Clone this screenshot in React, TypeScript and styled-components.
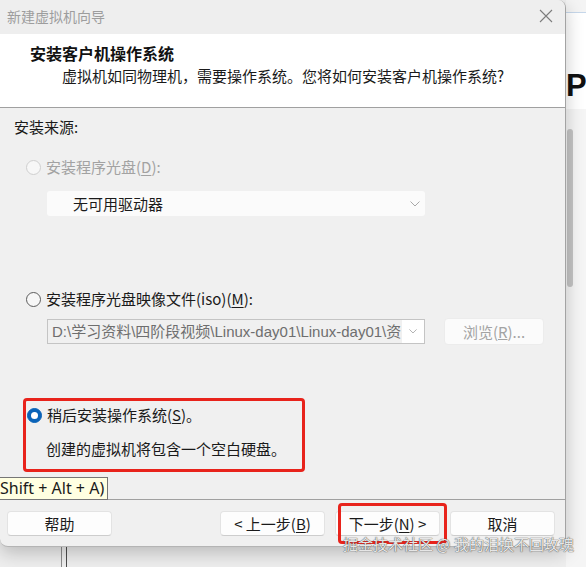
import React from "react";
import styled, { createGlobalStyle } from "styled-components";

const GlobalStyle = createGlobalStyle`
  html, body {
    margin: 0;
    padding: 0;
  }
  body {
    width: 586px;
    height: 567px;
    overflow: hidden;
    background: #efefef;
    font-family: "Noto Sans CJK SC", "Noto Sans", sans-serif;
    -webkit-font-smoothing: antialiased;
  }
  * {
    box-sizing: border-box;
  }
`;

const ChevronDown: React.FC<{ color?: string; size?: number }> = ({
  color = "#9a9a9a",
  size = 10,
}) => (
  <svg width={size} height={size * 0.6} viewBox="0 0 10 6" fill="none">
    <polyline points="0.5,0.5 5,5 9.5,0.5" stroke={color} strokeWidth="1" />
  </svg>
);

const CloseIcon = () => (
  <svg width="14" height="14" viewBox="0 0 14 14" fill="none">
    <path d="M1 1 L13 13 M13 1 L1 13" stroke="#7d7d7d" strokeWidth="1.1" />
  </svg>
);

const App: React.FC = () => {
  return (
    <>
      <GlobalStyle />
      <Desktop>
        <BackWindow>
          <BackTopBar />
          <BackHero>Pp</BackHero>
          <BackScroll>
            <ScrollThumb />
          </BackScroll>
        </BackWindow>
        <BackLines>
          <VLine $color="#8d8d8d" />
          <VLine $color="#4c4c4c" />
        </BackLines>

        <Dialog>
          <TitleBar>
            <WindowTitle>新建虚拟机向导</WindowTitle>
            <CloseIcon />
          </TitleBar>

          <Header>
            <HeaderTitle>安装客户机操作系统</HeaderTitle>
            <HeaderSub>
              虚拟机如同物理机，需要操作系统。您将如何安装客户机操作系统?
            </HeaderSub>
          </Header>

          <Body>
            <SectionLabel>安装来源:</SectionLabel>

            <OptionRow $top={20} $disabled>
              <Radio $state="disabled" />
              <span>
                安装程序光盘(<u>D</u>):
              </span>
            </OptionRow>
            <DriveSelect>
              <span>无可用驱动器</span>
              <ChevronDown color="#a8a8a8" />
            </DriveSelect>

            <OptionRow $top={73}>
              <Radio $state="off" />
              <span>
                安装程序光盘映像文件(iso)(<u>M</u>):
              </span>
            </OptionRow>
            <PathRow>
              <PathCombo>
                <PathText>D:\学习资料\四阶段视频\Linux-day01\Linux-day01\资</PathText>
                <ComboButton>
                  <ChevronDown color="#a0a0a0" size={8} />
                </ComboButton>
              </PathCombo>
              <BrowseButton>
                浏览(<u>R</u>)...
              </BrowseButton>
            </PathRow>

            <Marked>
              <OptionRow $top={0}>
                <Radio $state="on" />
                <span>
                  稍后安装操作系统(<u>S</u>)。
                </span>
              </OptionRow>
              <Note>创建的虚拟机将包含一个空白硬盘。</Note>
            </Marked>
          </Body>

          <Footer>
            <Button>帮助</Button>
            <ButtonGroup>
              <Button>
                &lt; 上一步(<u>B</u>)
              </Button>
              <NextButton>
                下一步(<u>N</u>) &gt;
              </NextButton>
              <Button>取消</Button>
            </ButtonGroup>
          </Footer>
        </Dialog>

        <Tooltip>Shift + Alt + A)</Tooltip>
        <Watermark>掘金技术社区 @ 我的泪换不回玫瑰</Watermark>
      </Desktop>
    </>
  );
};

export default App;

const Desktop = styled.div`
  position: relative;
  width: 586px;
  height: 567px;
  overflow: hidden;
  background: #eeeeee;
`;

const BackWindow = styled.div`
  position: absolute;
  top: 0;
  left: 566px;
  right: 0;
  bottom: 0;
  display: flex;
  flex-direction: column;
  background: #f5f5f5;
`;

const BackTopBar = styled.div`
  height: 13px;
  background: #f4f4f4;
  border-bottom: 1px solid #c6d7ea;
`;

const BackHero = styled.div`
  height: 96px;
  padding: 58px 0 0 0;
  background: #ffffff;
  color: #111;
  font: 700 31px/30px "Liberation Sans", Arial, sans-serif;
  white-space: nowrap;
  overflow: hidden;
`;

const BackScroll = styled.div`
  flex: 1;
  padding: 20px 0 0 1px;
`;

const ScrollThumb = styled.div`
  width: 6px;
  height: 158px;
  border-radius: 3px;
  background: #c4c4c4;
`;

const BackLines = styled.div`
  position: absolute;
  left: 61px;
  top: 545px;
  bottom: 0;
  display: flex;
  gap: 4px;
`;

const VLine = styled.div<{ $color: string }>`
  width: 1px;
  height: 100%;
  background: ${({ $color }) => $color};
`;

const Dialog = styled.div`
  position: absolute;
  top: 0;
  left: 0;
  width: 566px;
  height: 547px;
  display: flex;
  flex-direction: column;
  background: #f0f0f0;
  border-right: 1px solid #a3a3a3;
  border-bottom: 1px solid #b4b4b4;
  border-radius: 0 8px 8px 8px;
  overflow: hidden;
  box-shadow: 0 6px 18px rgba(0, 0, 0, 0.22);
  color: #1a1a1a;
  font-size: 15px;
`;

const TitleBar = styled.div`
  height: 34px;
  flex-shrink: 0;
  display: flex;
  align-items: center;
  justify-content: space-between;
  padding: 0 12px 2px 7px;
  background: #eeeeee;
`;

const WindowTitle = styled.span`
  color: #9d9d9d;
  font-size: 14px;
  line-height: 20px;
`;

const Header = styled.div`
  height: 74px;
  flex-shrink: 0;
  padding: 9px 0 0 30px;
  background: #ffffff;
  border-bottom: 1px solid #a0a0a0;
`;

const HeaderTitle = styled.div`
  font-weight: 700;
  font-size: 16px;
  line-height: 20px;
  color: #111;
`;

const HeaderSub = styled.div`
  margin: 3px 0 0 32px;
  font-size: 15px;
  line-height: 20px;
  color: #1a1a1a;
  white-space: nowrap;
`;

const Body = styled.div`
  height: 391px;
  flex-shrink: 0;
  padding: 9px 0 0 14px;
`;

const SectionLabel = styled.div`
  line-height: 20px;
`;

const OptionRow = styled.div<{ $top: number; $disabled?: boolean }>`
  display: flex;
  align-items: center;
  gap: 5px;
  height: 20px;
  margin: ${({ $top }) => $top}px 0 0 12px;
  color: ${({ $disabled }) => ($disabled ? "#a2a2a2" : "#1a1a1a")};
  line-height: 20px;
  white-space: nowrap;

  u {
    text-underline-offset: 2px;
  }
`;

const Radio = styled.span<{ $state: "off" | "on" | "disabled" }>`
  flex-shrink: 0;
  width: 15px;
  height: 15px;
  border-radius: 50%;
  background: ${({ $state }) => ($state === "on" ? "#0a63b8" : "#f7f7f7")};
  border: 1px solid
    ${({ $state }) =>
      $state === "on" ? "#0a63b8" : $state === "disabled" ? "#cfcfcf" : "#5c5c5c"};
  display: flex;
  align-items: center;
  justify-content: center;

  &::after {
    content: "";
    display: ${({ $state }) => ($state === "on" ? "block" : "none")};
    width: 7px;
    height: 7px;
    border-radius: 50%;
    background: #ffffff;
  }
`;

const DriveSelect = styled.div`
  width: 378px;
  height: 25px;
  margin: 14px 0 0 33px;
  padding: 0 5px 0 26px;
  display: flex;
  align-items: center;
  justify-content: space-between;
  background: #fbfbfb;
  border-radius: 3px;
  line-height: 20px;
  color: #1b1b1b;
`;

const PathRow = styled.div`
  display: flex;
  align-items: center;
  gap: 19px;
  height: 27px;
  margin: 9px 0 0 33px;
`;

const PathCombo = styled.div`
  width: 378px;
  height: 25px;
  display: flex;
  border: 1px solid #c4c4c4;
  background: #f0f0f0;
`;

const PathText = styled.div`
  flex: 1;
  min-width: 0;
  padding-left: 4px;
  overflow: hidden;
  white-space: nowrap;
  color: #6e6e6e;
  font-family: "Liberation Sans", "Noto Sans CJK SC", sans-serif;
  line-height: 23px;
`;

const ComboButton = styled.div`
  width: 22px;
  flex-shrink: 0;
  display: flex;
  align-items: center;
  justify-content: center;
  background: #ffffff;
`;

const BrowseButton = styled.div`
  width: 100px;
  height: 27px;
  display: flex;
  align-items: center;
  justify-content: center;
  background: #fbfbfb;
  border: 1px solid #ececec;
  border-radius: 4px;
  color: #a3a3a3;
  line-height: 20px;
`;

const Marked = styled.div`
  width: 282px;
  height: 74px;
  margin: 53px 0 0 9px;
  padding: 4px 0 0 0;
  border: 3px solid #e8231b;
  border-radius: 4px;

  ${OptionRow} {
    margin-left: 1px;
  }
`;

const Note = styled.div`
  margin: 14px 0 0 20px;
  line-height: 20px;
  white-space: nowrap;
`;

const Footer = styled.div`
  flex: 1;
  display: flex;
  align-items: flex-start;
  justify-content: space-between;
  padding: 11px 10px 0 7px;
  border-top: 1px solid #a0a0a0;
`;

const ButtonGroup = styled.div`
  display: flex;
  gap: 10px;
`;

const Button = styled.div`
  position: relative;
  width: 105px;
  height: 25px;
  display: flex;
  align-items: center;
  justify-content: center;
  background: #fdfdfd;
  border: 1px solid #e3e3e3;
  border-bottom-color: #cdcdcd;
  border-radius: 4px;
  line-height: 20px;
  color: #1a1a1a;
  white-space: nowrap;

  u {
    text-underline-offset: 2px;
  }
`;

const NextButton = styled(Button)`
  &::after {
    content: "";
    position: absolute;
    left: 2px;
    right: -8px;
    top: -9px;
    bottom: -9px;
    border: 3px solid #e8231b;
    border-radius: 4px;
  }
`;

const Tooltip = styled.div`
  position: absolute;
  left: -2px;
  top: 477px;
  width: 110px;
  height: 23px;
  padding-left: 1px;
  background: #ffffe1;
  border: 1px solid #767676;
  font: 16px/21px "Noto Sans", "Liberation Sans", sans-serif;
  color: #1a1a1a;
  white-space: nowrap;
  overflow: hidden;
`;

const Watermark = styled.div`
  position: absolute;
  left: 343px;
  top: 534px;
  font-size: 15px;
  line-height: 20px;
  color: rgba(250, 250, 250, 0.9);
  text-shadow: 0 0 1px #555, 0 0 1px #555;
  white-space: nowrap;
`;
